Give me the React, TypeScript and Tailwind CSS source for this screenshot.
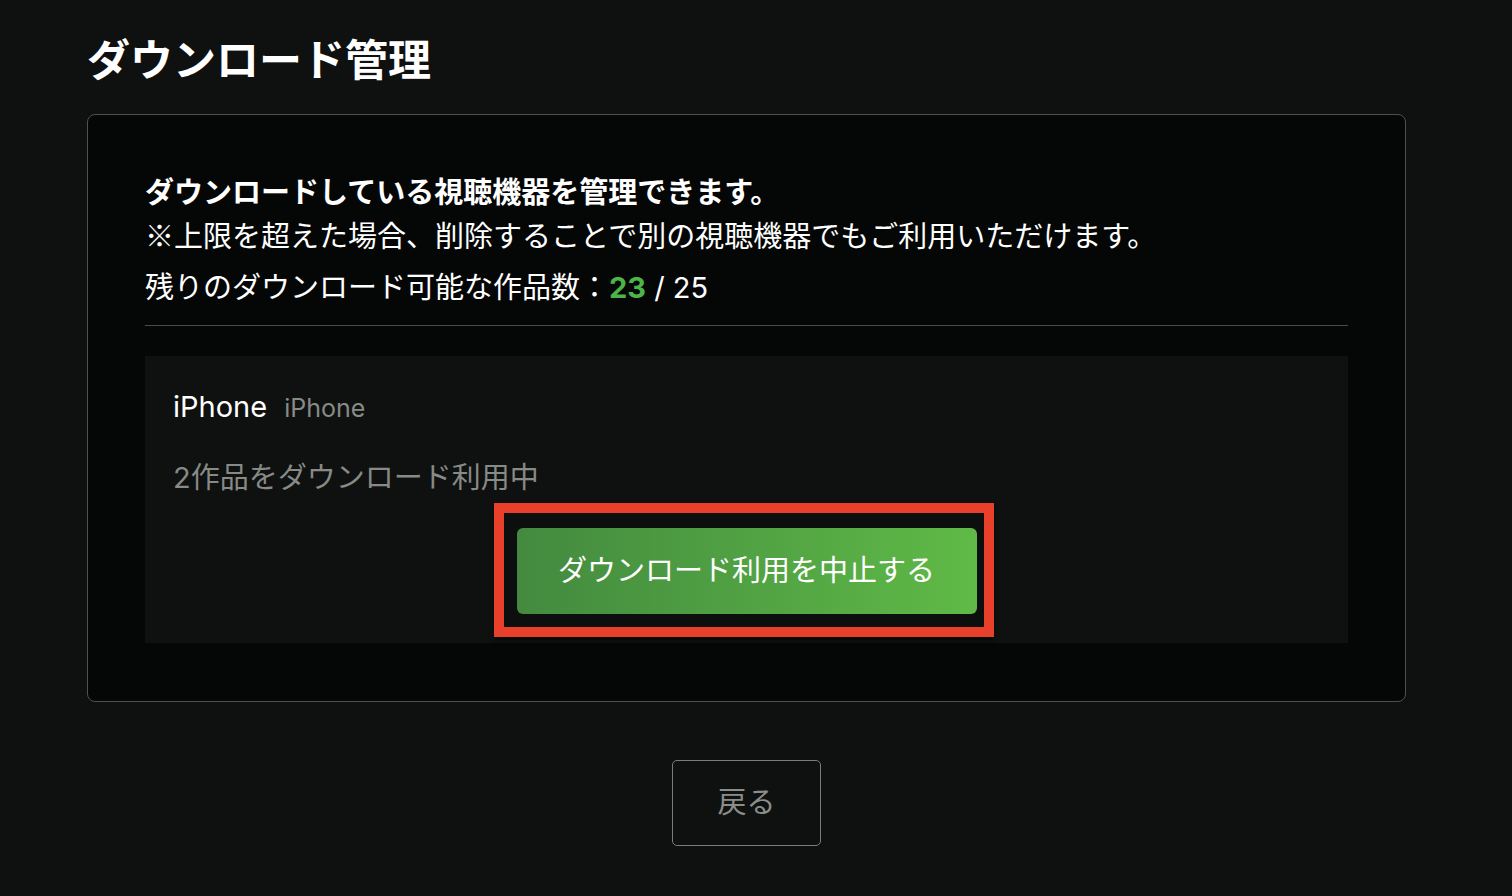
const FONT = "font-['Inter','Noto_Sans_CJK_JP',sans-serif]";

export default function App() {
  return (
    <div className={`min-h-screen bg-[#0f1111] ${FONT}`}>
      <div className="ml-[87px] w-[1319px]">
        {/* Title */}
        <h1 className="pt-[28px] h-[92px] text-[43px] leading-[64px] font-bold text-white">
          ダウンロード管理
        </h1>

        {/* Card */}
        <div className="mt-[22px] rounded-[8px] border border-[#4d504c] bg-[#050706] px-[57px] pt-[56px] pb-[58px]">
          <p className="text-[29px] leading-[44px] font-bold text-white">
            ダウンロードしている視聴機器を管理できます。
          </p>
          <p className="h-[44px] text-[29px] leading-[44px] text-white">
            <span className="font-['Noto_Sans_CJK_JP',sans-serif] leading-none">※</span>
            上限を超えた場合、削除することで別の視聴機器でもご利用いただけます。
          </p>
          <p className="mt-[7px] text-[29px] leading-[44px] text-white">
            残りのダウンロード可能な作品数：
            <span className="font-bold text-[#4db34a]">23</span> / 25
          </p>

          <div className="mt-[15px] h-px bg-[#4a4c49]" />

          {/* Device */}
          <div className="mt-[30px] bg-[#0f1111] px-[28px] pt-[28px] pb-[6px]">
            <div className="flex items-baseline gap-[17px] h-[46px] leading-[46px]">
              <span className="text-[29px] text-white">iPhone</span>
              <span className="text-[25px] text-[#878a85]">iPhone</span>
            </div>
            <p className="mt-[26px] text-[29px] leading-[44px] text-[#878a85]">
              2作品をダウンロード利用中
            </p>
            <div className="mt-[3px] flex justify-center">
              <div className="mr-[6px] h-[134px] w-[500px] border-[10px] border-[#e8402a] bg-[#0d0e0e] pl-[13px] pr-[7px] pt-[15px] shadow-[0_3px_4px_rgba(0,0,0,0.6)]">
                <button className="flex h-[86px] w-[460px] items-center justify-center rounded-[6px] bg-linear-to-r from-[#438a3f] to-[#5fba46] text-[29px] text-white">
                  ダウンロード利用を中止する
                </button>
              </div>
            </div>
          </div>
        </div>

        {/* Back */}
        <div className="mt-[58px] flex justify-center">
          <button className="flex h-[86px] w-[149px] items-center justify-center rounded-[5px] border border-[#7a7d78] text-[29px] text-[#8a8d88]">
            戻る
          </button>
        </div>
      </div>
    </div>
  );
}
